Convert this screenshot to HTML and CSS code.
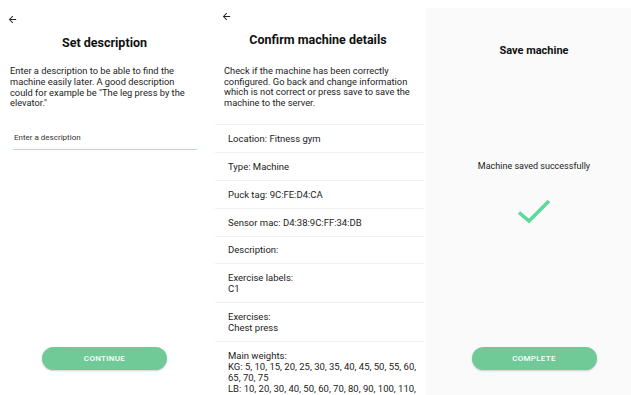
FILE: index.html
```html
<!DOCTYPE html>
<html>
<head>
<meta charset="utf-8">
<link rel="stylesheet" href="styles.css">
</head>
<body>
<div class="screens">
  <section class="panel p1">
    <svg class="back" viewBox="0 0 24 24" width="11" height="11"><path d="M20 11H7.83l5.59-5.59L12 4l-8 8 8 8 1.41-1.41L7.83 13H20v-2z" fill="#222"/></svg>
    <h1 class="title">Set description</h1>
    <p class="intro">Enter a description to be able to find the machine easily later. A good description could for example be "The leg press by the elevator."</p>
    <div class="field">Enter a description</div>
    <button class="btn">CONTINUE</button>
  </section>
  <section class="panel p2">
    <svg class="back" viewBox="0 0 24 24" width="11" height="11"><path d="M20 11H7.83l5.59-5.59L12 4l-8 8 8 8 1.41-1.41L7.83 13H20v-2z" fill="#222"/></svg>
    <h1 class="title">Confirm machine details</h1>
    <p class="intro">Check if the machine has been correctly configured. Go back and change information which is not correct or press save to save the machine to the server.</p>
    <ul class="list">
      <li>Location: Fitness gym</li>
      <li>Type: Machine</li>
      <li>Puck tag: 9C:FE:D4:CA</li>
      <li>Sensor mac: D4:38:9C:FF:34:DB</li>
      <li>Description:</li>
      <li>Exercise labels:<br>C1</li>
      <li>Exercises:<br>Chest press</li>
      <li>Main weights:<br>KG: 5, 10, 15, 20, 25, 30, 35, 40, 45, 50, 55, 60, 65, 70, 75<br>LB: 10, 20, 30, 40, 50, 60, 70, 80, 90, 100, 110, 120, 130, 140, 150</li>
    </ul>
  </section>
  <section class="panel p3">
    <h1 class="title3">Save machine</h1>
    <p class="msg">Machine saved successfully</p>
    <svg class="check" viewBox="0 0 34 26" width="34" height="26"><path d="M2 14.5 L12 23 L32 3" fill="none" stroke="#5cda9c" stroke-width="3.6"/></svg>
    <button class="btn">COMPLETE</button>
  </section>
</div>
</body>
</html>
```

FILE: styles.css
```css
html, body {
  margin: 0;
  padding: 0;
  background: #fff;
  overflow: hidden;
}
body {
  font-family: Roboto, "Liberation Sans", sans-serif;
  color: #222;
}
.screens {
  display: flex;
  width: 631px;
  height: 395px;
  overflow: hidden;
}
.panel {
  flex: none;
  height: 395px;
  box-sizing: border-box;
  display: flex;
  flex-direction: column;
  overflow: hidden;
}
.panel > * {
  flex-shrink: 0;
}
.p1 {
  width: 209px;
  margin-right: 1px;
  padding: 0 10px;
}
.p2 {
  width: 216px;
  padding: 0 0 0 14px;
}
.p3 {
  width: 216px;
  margin-top: 8px;
  height: 387px;
  background: #fafafa;
  align-items: center;
}
.back {
  display: block;
  margin-top: 14px;
  margin-left: -3px;
}
.p2 .back {
  margin-top: 11px;
  margin-left: -3px;
}
.title {
  margin: 10px 0 0;
  font-size: 12.5px;
  line-height: 15px;
  font-weight: 700;
  text-align: center;
  color: #111;
}
.p2 .title {
  margin-right: 14px;
  margin-top: 10px;
}
.intro {
  margin: 16px 0 0;
  font-size: 9.3px;
  line-height: 10.8px;
  color: #222;
}
.p2 .intro {
  line-height: 10.6px;
  margin-top: 19px;
  padding-right: 4px;
}
.field {
  margin: 24px 2px 0 3px;
  padding: 0 1px 6px;
  font-size: 8px;
  line-height: 10px;
  color: #333;
  border-bottom: 1px solid #a9e6c8;
}
.btn {
  margin: auto auto 25px;
  width: 125px;
  height: 23px;
  border: none;
  border-radius: 12px;
  background: #6fca97;
  color: #fff;
  font-family: Roboto, "Liberation Sans", sans-serif;
  font-size: 8px;
  font-weight: 500;
  letter-spacing: 0.3px;
  box-shadow: 0 1px 2px rgba(0, 0, 0, 0.18);
  padding: 0;
}
.list {
  list-style: none;
  margin: 16px 2px 0 -9px;
  padding: 0;
}
.list li {
  border-top: 1px solid #f1f1f1;
  padding: 7.9px 0 7.9px 13px;
  font-size: 9.5px;
  line-height: 11px;
  color: #222;
  box-sizing: border-box;
}
.title3 {
  margin: 36px 0 0;
  font-size: 11px;
  line-height: 13px;
  font-weight: 700;
  color: #111;
}
.msg {
  margin: 104px 0 0;
  font-size: 9px;
  line-height: 11px;
  color: #222;
}
.check {
  display: block;
  margin-top: 26px;
}
```
